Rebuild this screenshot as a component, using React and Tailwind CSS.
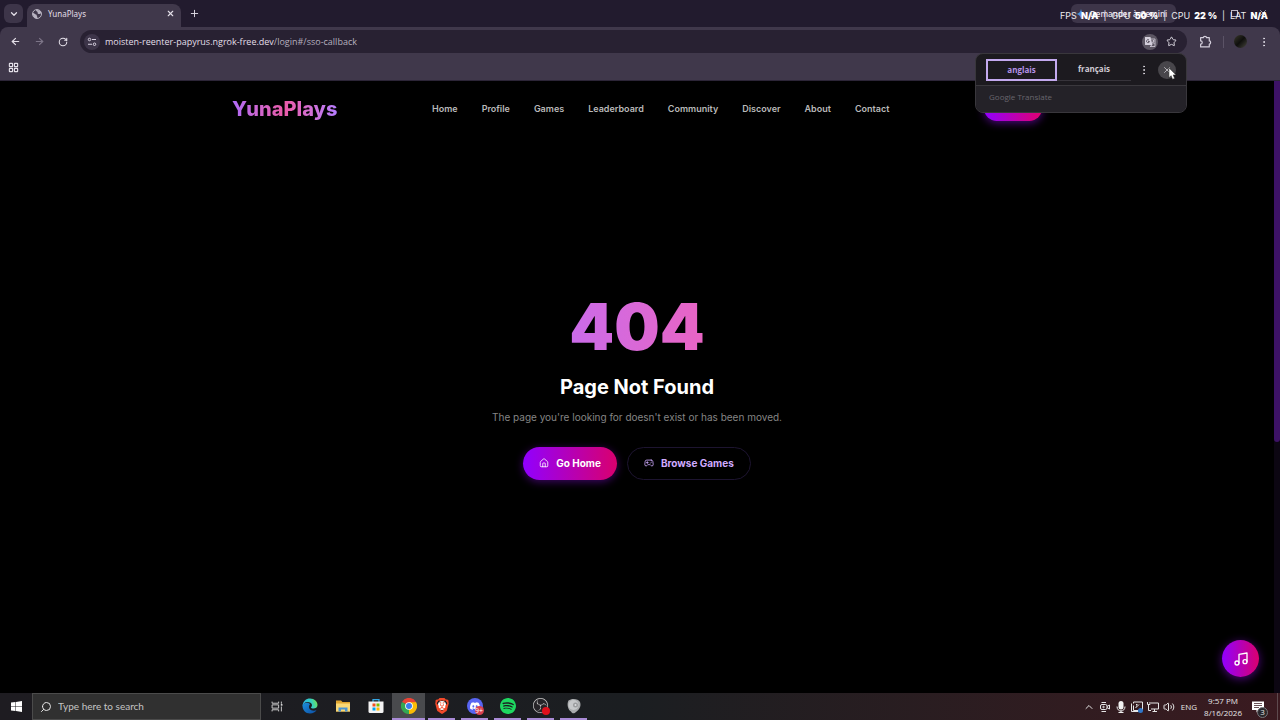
import {
  ArrowLeft,
  ArrowRight,
  ChevronDown,
  ChevronUp,
  EllipsisVertical,
  Gamepad2,
  House,
  LayoutGrid,
  Music,
  Plus,
  RotateCw,
  Search,
  Star,
  Volume2,
  X,
} from "lucide-react";
import { SiBrave, SiDiscord, SiObsstudio, SiSpotify } from "react-icons/si";

const links = [
  "Home",
  "Profile",
  "Games",
  "Leaderboard",
  "Community",
  "Discover",
  "About",
  "Contact",
];

const stats = [
  { label: "FPS", value: "N/A" },
  { label: "GPU", value: "50 %" },
  { label: "CPU", value: "22 %" },
  { label: "LAT", value: "N/A" },
];

function GlobeIcon() {
  return (
    <svg viewBox="0 0 20 20" className="size-[10px]">
      <circle cx="10" cy="10" r="9" fill="none" stroke="#b9b4c2" strokeWidth="2" />
      <path d="M2 8c3 0 4 3 6 3s1 4 3 5l-1 3C5 19 1 14 2 8z" fill="#b9b4c2" />
      <path d="M8 2c0 3 2 2 3 4s-1 3 2 4 3-2 6-1c0-4-4-8-11-7z" fill="#b9b4c2" />
    </svg>
  );
}

function TuneIcon() {
  return (
    <svg viewBox="0 0 20 20" className="size-[10px]" fill="none" stroke="#d9d3e2" strokeWidth="2">
      <circle cx="5" cy="5" r="2.5" />
      <path d="M10 5h8M2 14.5h8" />
      <circle cx="15" cy="14.5" r="2.5" />
    </svg>
  );
}

function TranslateIcon() {
  return (
    <svg viewBox="0 0 24 24" className="size-3">
      <path d="M2 2h11l4 16H3a1 1 0 0 1-1-1z" fill="#d4cfdc" />
      <path
        d="M14 6h8v15H12l4-3M17 10h4M19 8v2c0 3-2 4-3 5M17 12l4 4"
        fill="none"
        stroke="#d4cfdc"
        strokeWidth="1.6"
      />
      <path d="M10 8a3 3 0 1 0 1 3H8" fill="none" stroke="#5c5663" strokeWidth="2" />
    </svg>
  );
}

function ExtensionIcon() {
  return (
    <svg viewBox="0 0 24 24" className="size-[13px]" fill="none" stroke="#d3cedb" strokeWidth="2.2">
      <path d="M3 5h5a3 2.500 0 0 1 6 0h5v6a2.500 3 0 0 1 0 6v5H3v-5a3 3 0 0 0 0-6z" strokeLinejoin="round" />
    </svg>
  );
}

function GeminiIcon() {
  return (
    <svg viewBox="0 0 24 24" className="size-[10px]">
      <defs>
        <linearGradient id="gemini" x1="0" y1="0" x2="1" y2="0.6">
          <stop offset="0" stopColor="#3fae6b" />
          <stop offset="0.5" stopColor="#4a8df0" />
          <stop offset="1" stopColor="#d96570" />
        </linearGradient>
      </defs>
      <path d="M12 0c1 7 5 11 12 12-7 1-11 5-12 12-1-7-5-11-12-12C7 11 11 7 12 0z" fill="url(#gemini)" />
    </svg>
  );
}

function Cursor() {
  return (
    <svg viewBox="0 0 12 18" className="h-[13px] w-[9px]">
      <path d="M1 1v14l3-3 2 5 3-1-2-5h4z" fill="#fff" stroke="#222" strokeWidth="0.8" />
    </svg>
  );
}

function EdgeIcon() {
  return (
    <svg viewBox="0 0 32 32" className="size-4">
      <defs>
        <linearGradient id="edge-top" x1="0" y1="0.5" x2="1" y2="0.3">
          <stop offset="0" stopColor="#2bb3e8" />
          <stop offset="0.6" stopColor="#34cfc0" />
          <stop offset="1" stopColor="#74e34f" />
        </linearGradient>
        <linearGradient id="edge-body" x1="0" y1="0" x2="1" y2="1">
          <stop offset="0" stopColor="#1c8fdc" />
          <stop offset="1" stopColor="#0d4ea3" />
        </linearGradient>
      </defs>
      <path d="M1 15C1 24 7 31 16 31c6 0 11-3 13-7-5 3-16 1-15-7 0-3 2-4 2-5-5-5-14-2-15 3z" fill="url(#edge-body)" />
      <path d="M1 16C2 6 8 1 16 1c9 0 15 6 15 13 0 5-4 7-8 7-3 0-5-1-5-2s2-2 2-5c0-4-5-6-9-6-5 0-9 4-10 8z" fill="url(#edge-top)" />
    </svg>
  );
}

function FolderIcon() {
  return (
    <svg viewBox="0 0 32 28" className="h-[14px] w-4">
      <path d="M2 3h10l3 3h15v19H2z" fill="#e0a530" />
      <path d="M2 9h28v16H2z" fill="#fad875" />
      <path d="M7 25v-8h18v8h-5v-4h-8v4z" fill="#4a93d2" />
    </svg>
  );
}

function StoreIcon() {
  return (
    <svg viewBox="0 0 32 32" className="size-4">
      <path d="M10 9V3h12v6" fill="none" stroke="#35a7e4" strokeWidth="2.5" />
      <path d="M1 7h30v20a3 3 0 0 1-3 3H4a3 3 0 0 1-3-3z" fill="#f3f3f3" />
      <path d="M9 11h6v6H9z" fill="#f25022" />
      <path d="M17 11h6v6h-6z" fill="#7fba00" />
      <path d="M9 19h6v6H9z" fill="#00a4ef" />
      <path d="M17 19h6v6h-6z" fill="#ffb900" />
    </svg>
  );
}

function ChromeIcon() {
  return (
    <svg viewBox="0 0 48 48" className="size-4">
      <path d="M24 24L3 12A24 24 0 0 1 45 12z" fill="#ea4335" />
      <path d="M24 24L45 12A24 24 0 0 1 24 48z" fill="#fbbc05" />
      <path d="M24 24V48A24 24 0 0 1 3 12z" fill="#34a853" />
      <path d="M24 13h21l-1 6-10 11-10 18 6-18z" fill="#fbbc05" />
      <circle cx="24" cy="24" r="11.5" fill="#fff" />
      <circle cx="24" cy="24" r="9" fill="#3b7ded" />
    </svg>
  );
}

function BraveIcon() {
  return (
    <span className="relative">
      <span className="absolute inset-x-1 top-[3px] bottom-1 rounded-sm bg-white" />
      <SiBrave size={16} color="#f2492a" className="relative" />
    </span>
  );
}

function DiscordIcon() {
  return (
    <span className="relative flex size-4 items-center justify-center rounded-full bg-[#5865f2] text-white">
      <SiDiscord size={10} />
      <span className="absolute -right-px -bottom-px flex size-[9px] items-center justify-center rounded-full bg-[#d8404f] text-[7px] leading-none">
        9+
      </span>
    </span>
  );
}

function ObsIcon() {
  return (
    <span className="relative flex size-4 items-center justify-center rounded-full bg-[#262428] text-[#c9c9c9]">
      <SiObsstudio size={15} />
      <span className="absolute -right-px -bottom-px size-2 rounded-full bg-[#e0101c]" />
    </span>
  );
}

function DiscIcon() {
  return (
    <svg viewBox="0 0 32 32" className="size-4">
      <path d="M5 5C11 0 25 1 28 8c3 8-1 15-8 20-3 3-8 4-10-1C4 24 1 12 5 5z" fill="#a9abad" />
      <circle cx="15" cy="14" r="10" fill="#c6c8ca" />
      <circle cx="19" cy="14" r="5" fill="#9b9d9f" />
      <circle cx="19" cy="14" r="2" fill="#dcdddf" />
    </svg>
  );
}

function TaskViewIcon() {
  return (
    <svg viewBox="0 0 22 20" className="h-[11px] w-3" fill="none" stroke="#dedede" strokeWidth="1.6">
      <path d="M2 1v3h12V1M2 19v-3h12v3M2 7h12v6H2zM19 1v4M19 10v9" />
      <path d="M18 7h3" strokeWidth="3" />
    </svg>
  );
}

const apps = [
  { name: "Microsoft Edge", icon: <EdgeIcon /> },
  { name: "File Explorer", icon: <FolderIcon /> },
  { name: "Microsoft Store", icon: <StoreIcon /> },
  { name: "Google Chrome", icon: <ChromeIcon />, active: true },
  { name: "Brave", icon: <BraveIcon />, open: true },
  { name: "Discord", icon: <DiscordIcon />, open: true },
  { name: "Spotify", icon: <SiSpotify size={16} color="#1ed760" />, open: true },
  { name: "OBS Studio", icon: <ObsIcon />, open: true },
  { name: "Disc", icon: <DiscIcon />, open: true },
];

function TranslatePopup() {
  return (
    <div className="absolute top-[53px] right-[93px] z-20 w-[212px] overflow-hidden rounded-lg border border-[#39373c] bg-[#1c1a1f] text-[8px]">
      <div className="flex h-8 items-center border-b border-[#3a383d] pl-[10px]">
        <button className="h-[22px] w-[71px] border-2 border-[#c3a9ee] font-bold text-[#b794e8]">
          anglais
        </button>
        <button className="h-[22px] w-[74px] border-b border-[#37343b] font-bold text-[#cfcbd4]">
          français
        </button>
        <button aria-label="Options" className="ml-[7px] text-[#d8d5dc]">
          <EllipsisVertical size={12} />
        </button>
        <button
          aria-label="Close translate"
          className="relative ml-2 flex size-[18px] items-center justify-center rounded-full bg-[#48464b] text-[#c9c6cd]"
        >
          <X size={10} />
          <span className="absolute top-[6px] left-[10px]">
            <Cursor />
          </span>
        </button>
      </div>
      <p className="flex h-[26px] items-center bg-[#242228] pl-[13px] pb-1 text-[#69666e]">
        Google Translate
      </p>
    </div>
  );
}

function Browser() {
  return (
    <div className="relative bg-[#221b2e] font-['Open_Sans',sans-serif] text-[#e3dfe8]">
      <div className="flex h-[27px] items-end pl-1">
        <button
          aria-label="Search tabs"
          className="mb-1 flex size-[19px] items-center justify-center rounded-md bg-[#3d3549]"
        >
          <ChevronDown size={10} strokeWidth={3} />
        </button>
        <div className="ml-1 flex h-[23px] w-[154px] items-center rounded-t-lg bg-[#40384b] pr-[2px] pb-1 pl-[5px]">
          <GlobeIcon />
          <span className="ml-[6px] flex-1 font-['Noto_Sans',sans-serif] text-[8px]">YunaPlays</span>
          <button aria-label="Close tab" className="p-1">
            <X size={9} strokeWidth={3} />
          </button>
        </div>
        <button aria-label="New tab" className="mb-2 ml-2">
          <Plus size={11} />
        </button>
      </div>

      <div className="flex h-[29px] items-center rounded-t-lg bg-[#40384b] pr-[10px] pl-[10px]">
        <button aria-label="Back">
          <ArrowLeft size={11} strokeWidth={2.5} />
        </button>
        <button aria-label="Forward" className="ml-[13px] text-[#7d7588]">
          <ArrowRight size={11} strokeWidth={2.5} />
        </button>
        <button aria-label="Reload" className="ml-[13px]">
          <RotateCw size={10} strokeWidth={2.5} />
        </button>
        <div className="ml-3 flex h-[23px] flex-1 items-center rounded-full bg-[#282132] px-1">
          <span className="flex size-4 items-center justify-center rounded-full bg-[#3d3549]">
            <TuneIcon />
          </span>
          <span className="ml-[5px] flex-1 text-[9px]">
            moisten-reenter-papyrus.ngrok-free.dev
            <span className="text-[#b5afbe]">/login#/sso-callback</span>
          </span>
          <button
            aria-label="Translate this page"
            className="flex size-4 items-center justify-center rounded-full bg-[#5c5663]"
          >
            <TranslateIcon />
          </button>
          <button aria-label="Bookmark" className="mr-[6px] ml-2">
            <Star size={11} />
          </button>
        </div>
        <button aria-label="Extensions" className="ml-3">
          <ExtensionIcon />
        </button>
        <span className="mr-[10px] ml-[11px] h-3 w-px bg-[#5b5366]" />
        <button
          aria-label="Profile"
          className="size-[13px] rounded-full bg-linear-to-br from-[#3b3a2c] via-[#0f0f0d] to-[#4a4940]"
        />
        <button aria-label="Menu" className="ml-[11px]">
          <EllipsisVertical size={12} />
        </button>
      </div>

      <div className="flex h-[25px] items-center border-b border-[#2c2537] bg-[#40384b] pb-[2px] pl-2">
        <button aria-label="Apps">
          <LayoutGrid size={11} strokeWidth={2.5} />
        </button>
      </div>

      <button className="absolute top-1 right-[104px] flex h-[19px] w-[105px] items-center gap-1 rounded-md bg-[#3d3549] pl-[5px] text-[8px] font-semibold whitespace-nowrap">
        <GeminiIcon />
        Demander à Gemini
      </button>
      <div className="absolute top-2 right-3 flex gap-5 text-[#bdb7c5]">
        <button aria-label="Restore" className="mt-[2px] size-[7px] border border-current" />
        <button aria-label="Close window">
          <X size={10} />
        </button>
      </div>

      <div className="absolute top-2 right-3 z-10 flex items-center font-['Inter',sans-serif] text-[9px] leading-4 text-[#ecebee]">
        {stats.map((s, i) => (
          <span key={s.label} className="flex items-center">
            {i > 0 && <span className="mx-[5px]">|</span>}
            {s.label}
            <b className="ml-1 font-black text-white">{s.value}</b>
          </span>
        ))}
      </div>

      <TranslatePopup />
    </div>
  );
}

function NotFound() {
  return (
    <div className="flex flex-1 bg-black font-['Inter',sans-serif]">
      <div className="flex flex-1 flex-col">
        <header className="mx-auto flex h-[55px] w-full max-w-[810px] items-center justify-between">
          <a
            href="#"
            className="bg-linear-to-r from-[#b06af8] via-[#ea5aa8] to-[#b77cff] bg-clip-text text-xl font-extrabold text-transparent"
          >
            YunaPlays
          </a>
          <nav className="flex gap-6 text-[9px] font-semibold text-[#b9b9b9]">
            {links.map((link) => (
              <a key={link} href="#">
                {link}
              </a>
            ))}
          </nav>
          <button
            aria-label="Sign in"
            className="h-[25px] w-[58px] rounded-full bg-linear-to-r/srgb from-[#9100ff] to-[#e0006e] shadow-[0_2px_8px_#9810fa80]"
          />
        </header>

        <main className="flex flex-1 flex-col items-center justify-center pb-[55px]">
          <h1 className="w-[293px] bg-linear-to-r from-[#b86cff] to-[#fb5bac] bg-clip-text text-center text-[64px] leading-none font-black text-transparent">
            404
          </h1>
          <h2 className="mt-[14px] text-xl leading-7 font-bold text-white">Page Not Found</h2>
          <p className="mt-[7px] text-[10px] leading-[18px] text-[#858585]">
            The page you're looking for doesn't exist or has been moved.
          </p>
          <div className="mt-[21px] flex gap-[10px] text-[10px] font-bold">
            <a
              href="#"
              className="flex h-[33px] items-center gap-[7px] rounded-full bg-linear-to-r/srgb from-[#9100ff] to-[#d9006e] px-4 text-white shadow-[0_2px_8px_#9810fa66]"
            >
              <House size={10} />
              Go Home
            </a>
            <a
              href="#"
              className="flex h-[33px] items-center gap-[7px] rounded-full border border-[#1d1430] px-4 text-[#cfabff]"
            >
              <Gamepad2 size={10} />
              Browse Games
            </a>
          </div>
        </main>
      </div>
      <div className="w-[6px] bg-[#0c0612]">
        <div className="h-[59%] rounded-b-sm bg-[#3d1266]" />
      </div>

      <button
        aria-label="Toggle music"
        className="absolute right-[21px] bottom-[43px] flex size-[37px] items-center justify-center rounded-full bg-linear-to-r/srgb from-[#9100ff] to-[#d9006e] text-white shadow-[0_2px_10px_#9810fa80]"
      >
        <Music size={16} />
      </button>
    </div>
  );
}

function Taskbar() {
  return (
    <footer className="flex h-[27px] items-center bg-linear-to-r from-[#1e1c21] via-[#1b1e21] to-[#3a1a20] font-['Open_Sans',sans-serif] text-[#e6e6e6]">
      <button aria-label="Start" className="flex w-8 justify-center">
        <svg viewBox="0 0 22 22" className="size-[11px]" fill="#fff">
          <path d="M0 3l9-1v8H0zM10 2L22 0v10H10zM0 11h9v9L0 19zM10 11h12v11l-12-2z" />
        </svg>
      </button>
      <label className="flex h-full w-[229px] items-center gap-[6px] border border-[#4b4b4b] bg-[#303030] pl-[7px]">
        <Search size={12} className="shrink-0 -scale-x-100" />
        <input
          type="text"
          aria-label="Search"
          placeholder="Type here to search"
          className="w-full bg-transparent font-['Lato',sans-serif] text-[10px] outline-none placeholder:text-[#c4c4c4]"
        />
      </label>
      <button aria-label="Task view" className="flex w-8 justify-center">
        <TaskViewIcon />
      </button>
      <div className="flex h-full">
        {apps.map((app) => (
          <button
            key={app.name}
            aria-label={app.name}
            className={
              "flex w-[33px] flex-col items-center justify-end " +
              (app.active ? "bg-[#494a4d]" : "")
            }
          >
            <span className="flex flex-1 items-center">{app.icon}</span>
            <span
              className={
                "h-[2px] " +
                (app.active ? "w-full bg-[#a98bd6]" : app.open ? "w-[27px] bg-[#a98bd6]" : "w-0")
              }
            />
          </button>
        ))}
      </div>

      <div className="ml-auto flex h-full items-center pr-[2px] text-[8px]">
        <div className="flex items-center gap-1">
          <ChevronUp size={12} />
          <svg viewBox="0 0 24 24" className="size-3" fill="none" stroke="#e6e6e6" strokeWidth="2">
            <rect x="3" y="7" width="13" height="10" rx="3" />
            <path d="M16 11l5-3v8l-5-3M5 3h9M5 21h9" />
            <circle cx="9" cy="12" r="1.5" />
          </svg>
          <svg viewBox="0 0 24 24" className="size-3" fill="#f2f2f2">
            <rect x="7" y="0" width="10" height="17" rx="5" />
            <path d="M4 11c0 12 16 12 16 0" fill="none" stroke="#f2f2f2" strokeWidth="2" />
            <path d="M11 19h2v3h4v2H7v-2h4z" />
          </svg>
          <svg viewBox="0 0 24 24" className="size-3" fill="none" stroke="#e6e6e6" strokeWidth="2">
            <path d="M5 5V2h18v17H5V9M1 5v16h14" />
            <path d="M9 14l7-7M10 7h3M10 10h2" />
            <circle cx="19" cy="19" r="5" fill="#2f76c9" stroke="none" />
          </svg>
          <svg viewBox="0 0 24 24" className="size-3" fill="none" stroke="#e6e6e6" strokeWidth="2">
            <path d="M8 4h15v12H8M11 21h9M15 16v5M1 2v5h5V2M3 7v12h5" />
          </svg>
          <Volume2 size={12} />
        </div>
        <span className="ml-[6px]">ENG</span>
        <div className="mr-[6px] ml-[7px] flex flex-col items-center leading-3">
          <span>9:57 PM</span>
          <span>8/16/2026</span>
        </div>
        <button aria-label="Notifications" className="relative mr-[9px] flex size-5 items-center">
          <svg viewBox="0 0 24 24" className="ml-1 size-3">
            <path d="M0 1h24v17H14l-5 5v-5H0z" fill="#fff" />
            <path d="M4 5h16M4 9h16M4 13h10" stroke="#3a1a20" strokeWidth="1.5" />
          </svg>
          <span className="absolute right-0 -bottom-px flex size-[11px] items-center justify-center rounded-full border border-[#77767a] bg-[#28262a] text-[8px] leading-none">
            3
          </span>
        </button>
        <span className="h-full w-px bg-[#5e4a4e]" />
      </div>
    </footer>
  );
}

export default function App() {
  return (
    <div className="relative flex min-h-screen flex-col">
      <Browser />
      <NotFound />
      <Taskbar />
    </div>
  );
}
